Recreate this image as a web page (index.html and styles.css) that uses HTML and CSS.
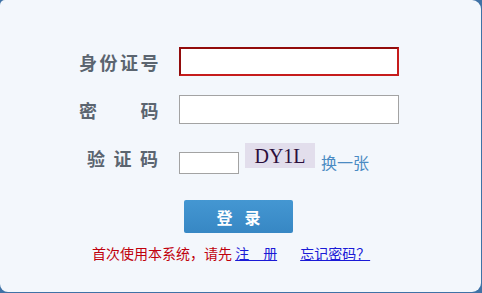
FILE: index.html
```html
<!DOCTYPE html>
<html lang="zh-CN">
<head>
<meta charset="utf-8">
<title>登录</title>
<link rel="stylesheet" href="styles.css">
</head>
<body>
<div class="panel">
  <form class="form">
    <div class="row">
      <label class="label">身份证号</label>
      <input class="field field-focus" type="text">
    </div>
    <div class="row">
      <label class="label">密　　码</label>
      <input class="field" type="password">
    </div>
    <div class="row row-code">
      <label class="label label-code">验证码</label>
      <input class="code-input" type="text">
      <span class="captcha">DY1L</span>
      <a class="refresh">换一张</a>
    </div>
    <div class="row-btn">
      <button class="btn" type="button">登录</button>
    </div>
    <p class="note">首次使用本系统，请先 <a class="link">注　册</a><a class="link link-forgot">忘记密码？</a></p>
  </form>
</div>
</body>
</html>
```
FILE: styles.css
```css
html, body {
  margin: 0;
  padding: 0;
}
body {
  background: #3f72a6;
  width: 482px;
  height: 293px;
  overflow: hidden;
  font-family: "Noto Sans CJK SC", "Noto Sans", sans-serif;
}
.panel {
  width: 481px;
  height: 292px;
  background: #f3f7fc;
  border-radius: 5px 9px 9px 8px;
  box-sizing: border-box;
  padding-top: 47px;
}
.form {
  margin: 0;
  padding-left: 79px;
}
.row {
  display: flex;
  align-items: center;
  height: 29px;
  margin-bottom: 19px;
}
.label {
  width: 100px;
  font-size: 18px;
  font-weight: 700;
  letter-spacing: 2.5px;
  color: #5b6570;
  line-height: 20px;
  white-space: nowrap;
}
.label-code {
  padding-left: 8px;
  letter-spacing: 8.5px;
  box-sizing: border-box;
  align-self: flex-start;
  margin-top: 5px;
}
.field {
  width: 220px;
  height: 29px;
  box-sizing: border-box;
  border: 1px solid #a3a3a3;
  background: #fff;
  margin: 0;
  padding: 0 4px;
  outline: none;
}
.field-focus {
  border: 2px solid #b51818;
  border-color: #920c0c #c61c1c #c61c1c #920c0c;
}
.row-code {
  height: 31px;
  align-items: flex-start;
  margin-bottom: 26px;
}
.code-input {
  width: 60px;
  height: 22px;
  box-sizing: border-box;
  border: 1px solid #a3a3a3;
  background: #fff;
  margin: 9px 0 0 0;
  padding: 0 3px;
  outline: none;
}
.captcha {
  width: 70px;
  height: 25px;
  margin-left: 6px;
  background: #e2deec;
  color: #2b0f3d;
  font-family: "Liberation Serif", serif;
  font-size: 20px;
  line-height: 26px;
  text-align: center;
}
.refresh {
  margin-left: 6px;
  margin-top: 8px;
  font-size: 16px;
  line-height: 22px;
  color: #4b8bc3;
  cursor: pointer;
}
.row-btn {
  padding-left: 105px;
  margin-bottom: 9px;
}
.btn {
  display: block;
  width: 109px;
  height: 33px;
  border: none;
  border-radius: 2px;
  background: linear-gradient(#4497d2, #3787c4);
  color: #fff;
  font-family: "Noto Sans CJK SC", sans-serif;
  font-size: 16px;
  font-weight: 700;
  letter-spacing: 12px;
  padding: 0 0 0 12px;
  margin: 0;
}
.note {
  margin: 0;
  padding-left: 13px;
  font-size: 14px;
  line-height: 22px;
  color: #c0000c;
  white-space: nowrap;
}
.link {
  color: #1a1ad6;
  text-decoration: underline;
  cursor: pointer;
}
.link-forgot {
  margin-left: 23px;
}
```
